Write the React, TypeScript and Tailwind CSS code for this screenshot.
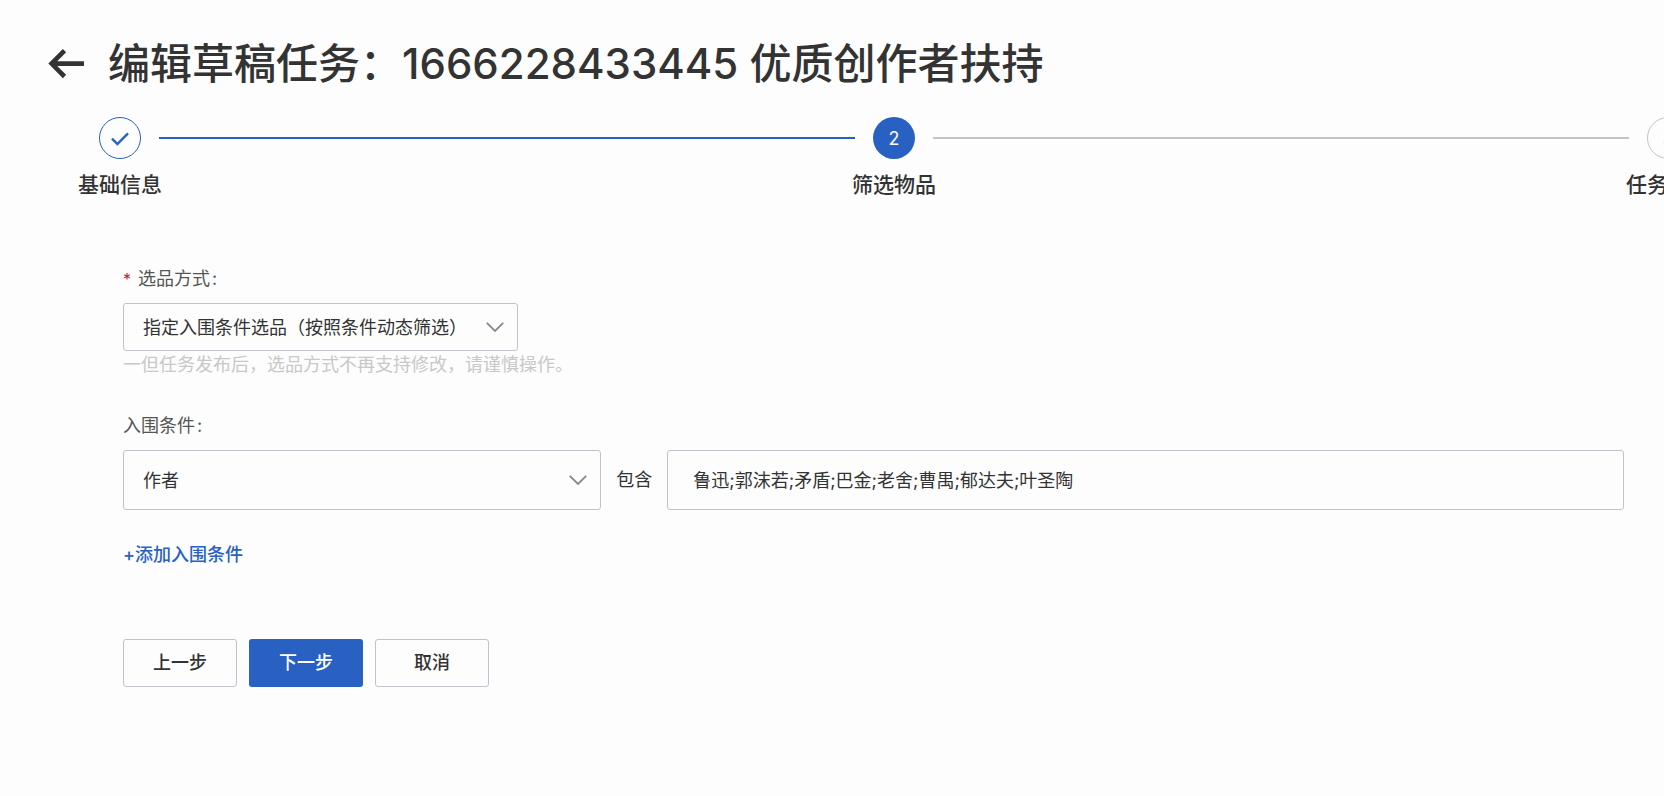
import { useState } from "react";
import type { ReactNode, SelectHTMLAttributes } from "react";

type StepState = "done" | "current" | "pending";

interface Step {
  title: string;
  state: StepState;
}

const steps: Step[] = [
  { title: "基础信息", state: "done" },
  { title: "筛选物品", state: "current" },
  { title: "任务设置", state: "pending" },
];

const circleStyles: Record<StepState, string> = {
  done: "border border-[#2861c2] text-[#2861c2]",
  current: "bg-[#2861c2] text-white",
  pending: "border border-[#c0c4ca] text-[#c0c4ca]",
};

function StepItem({ step, index }: { step: Step; index: number }) {
  return (
    <li
      className="flex w-[42px] shrink-0 flex-col items-center gap-2.5"
      aria-current={step.state === "current" ? "step" : undefined}
    >
      <span
        className={`flex size-[42px] items-center justify-center rounded-full pt-0.5 text-lg ${circleStyles[step.state]}`}
      >
        {step.state === "done" ? (
          <svg viewBox="0 0 18 14" className="h-3.5 w-[18px]" fill="none" stroke="currentColor" strokeWidth="2.4" aria-hidden="true">
            <path d="M1 6.600 6.400 12 17 1.400" />
          </svg>
        ) : (
          index + 1
        )}
      </span>
      <span className="text-[21px] leading-8 font-medium whitespace-nowrap">{step.title}</span>
    </li>
  );
}

function Connector({ active }: { active: boolean }) {
  return (
    <li
      aria-hidden="true"
      className={`mt-5 h-0.5 flex-1 ${active ? "bg-[#2861c2]" : "bg-[#c0c4ca]"}`}
    />
  );
}

function Select({ className, children, ...rest }: SelectHTMLAttributes<HTMLSelectElement> & { children: ReactNode }) {
  return (
    <div className={`relative ${className ?? ""}`}>
      <select
        {...rest}
        className="size-full appearance-none rounded-[3px] border border-[#c0c4ca] bg-transparent pt-0.5 pr-12 pl-[19px] text-lg outline-none focus:border-[#2861c2]"
      >
        {children}
      </select>
      <svg
        viewBox="0 0 18 10"
        className="pointer-events-none absolute top-1/2 right-3.5 h-2.5 w-[18px] -translate-y-1/2"
        fill="none"
        stroke="#888"
        strokeWidth="1.8"
        aria-hidden="true"
      >
        <path d="M.8.8 9 9 17.2.8" />
      </svg>
    </div>
  );
}

const buttonBase = "h-12 w-[114px] cursor-pointer rounded-[3px] text-lg font-medium";

export default function App() {
  const [authors, setAuthors] = useState("鲁迅;郭沫若;矛盾;巴金;老舍;曹禺;郁达夫;叶圣陶");

  return (
    <main className="min-h-screen overflow-hidden bg-[#fdfdfd] pt-8 pb-12 font-[Inter,'Noto_Sans_CJK_SC',sans-serif] text-[#333]">
      <header className="flex items-center gap-[23px] pl-12">
        <button type="button" aria-label="返回" className="cursor-pointer">
          <svg viewBox="0 0 37 30" className="h-[30px] w-[37px]" fill="none" stroke="currentColor" strokeWidth="4.6" aria-hidden="true">
            <path d="M36 14.600H4M16.500 1.700 3.600 14.600 16.500 27.500" />
          </svg>
        </button>
        <h1 className="text-[42px] leading-[64px] font-medium">编辑草稿任务：1666228433445 优质创作者扶持</h1>
      </header>

      <ol className="mt-[21px] -mr-[25px] ml-[99px] flex gap-[18px]">
        <StepItem step={steps[0]} index={0} />
        <Connector active />
        <StepItem step={steps[1]} index={1} />
        <Connector active={false} />
        <StepItem step={steps[2]} index={2} />
      </ol>

      <form className="mt-16 pr-10 pl-[123px] text-lg leading-7" onSubmit={(e) => e.preventDefault()}>
        <div className="flex flex-col items-start">
          <label htmlFor="method" className="flex text-[#555]">
            <span className="mr-[7px] w-2 text-base leading-7 text-[#c81e1e]">*</span>
            选品方式<span className="ml-0.5">:</span>
          </label>
          <Select id="method" className="mt-2.5 h-12 w-[395px]">
            <option>指定入围条件选品（按照条件动态筛选）</option>
          </Select>
          <p className="text-[#c8c8c8]">一但任务发布后，选品方式不再支持修改，请谨慎操作。</p>
        </div>

        <div className="mt-[33px]">
          <label htmlFor="field" className="flex text-[#555]">
            入围条件<span className="ml-0.5">:</span>
          </label>
          <div className="mt-2.5 grid grid-cols-[1fr_auto_2fr] items-center gap-[15px]">
            <Select id="field" className="h-[60px]">
              <option>作者</option>
            </Select>
            <label htmlFor="value">包含</label>
            <input
              id="value"
              type="text"
              value={authors}
              onChange={(e) => setAuthors(e.target.value)}
              className="h-[60px] w-full min-w-0 rounded-[3px] border border-[#c0c4ca] bg-transparent px-[25px] pb-0.5 outline-none focus:border-[#2861c2]"
            />
          </div>
        </div>

        <button type="button" className="mt-[31px] cursor-pointer font-medium text-[#2861c2]">
          +添加入围条件
        </button>

        <div className="mt-[70px] flex gap-3">
          <button type="button" className={`${buttonBase} border border-[#c0c4ca]`}>
            上一步
          </button>
          <button type="submit" className={`${buttonBase} bg-[#2861c2] text-white`}>
            下一步
          </button>
          <button type="button" className={`${buttonBase} border border-[#c0c4ca]`}>
            取消
          </button>
        </div>
      </form>
    </main>
  );
}
